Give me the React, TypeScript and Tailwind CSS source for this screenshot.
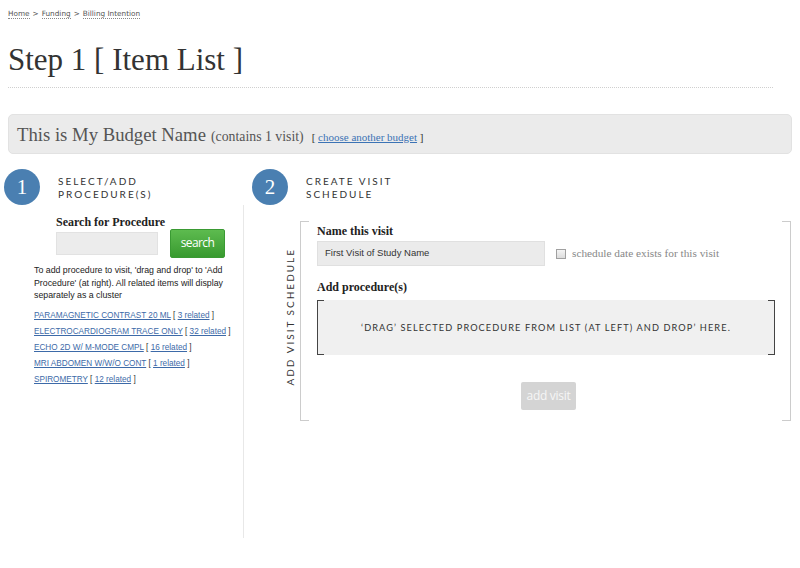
import React from "react";

const serif = { fontFamily: '"Liberation Serif", "Times New Roman", serif' };

function Circle({ n }: { n: string }) {
  return (
    <div className="w-[36px] h-[36px] rounded-full bg-[#4a7fb1] flex items-center justify-center shrink-0">
      <span className="text-white text-[21px] leading-none font-['Liberation_Serif',serif] mt-[1px]">{n}</span>
    </div>
  );
}

function StepHeader({ n, l1, l2 }: { n: string; l1: string; l2: string }) {
  return (
    <div className="flex items-start h-[36px]">
      <Circle n={n} />
      <div className="ml-[18px] mt-[6px] font-['Lato',sans-serif] text-[10px] leading-[13px] tracking-[2px] text-[#333]">
        <div>{l1}</div>
        <div>{l2}</div>
      </div>
    </div>
  );
}

const procedures: [string, string][] = [
  ["PARAMAGNETIC CONTRAST 20 ML", "3 related"],
  ["ELECTROCARDIOGRAM TRACE ONLY", "32 related"],
  ["ECHO 2D W/ M-MODE CMPL", "16 related"],
  ["MRI ABDOMEN W/W/O CONT", "1 related"],
  ["SPIROMETRY", "12 related"],
];

export default function App() {
  return (
    <div className="w-[800px] h-[568px] bg-white overflow-hidden text-[#333]">
      {/* Top */}
      <div className="px-2 pt-[9px]">
        <div className="font-['DejaVu_Sans',Verdana,sans-serif] text-[7.3px] leading-[10px] text-[#555] flex items-center gap-[3px] h-[10px]">
          <span className="border-b border-dotted border-[#888] leading-[9px]">Home</span>
          <span>&gt;</span>
          <span className="border-b border-dotted border-[#888] leading-[9px]">Funding</span>
          <span>&gt;</span>
          <span className="border-b border-dotted border-[#888] leading-[9px]">Billing Intention</span>
        </div>
        <h1 className="mt-[23px] text-[31px] leading-[36px] text-[#333] font-['Liberation_Serif',serif]">
          Step 1 [ Item List ]
        </h1>
        <div className="mt-[9px] w-[765px] border-t border-dotted border-[#cfcfcf]" />
        <div className="mt-[26px] h-[40px] box-border rounded-[5px] bg-[#ebebeb] border border-[#e2e2e2] pl-[8px] pt-[10px] flex items-baseline" style={serif}>
          <span className="text-[18.7px] leading-[19px] text-[#555]">This is My Budget Name</span>
          <span className="ml-[5px] text-[13.8px] text-[#555]">(contains 1 visit)</span>
          <span className="ml-[8px] text-[11px] text-[#333]">
            [ <span className="text-[#3b73b5] underline">choose another budget</span> ]
          </span>
        </div>
      </div>

      {/* Columns */}
      <div className="flex pl-[4px] mt-[15px]">
        {/* Left column */}
        <div className="w-[240px] flex flex-col">
          <StepHeader n="1" l1="SELECT/ADD" l2="PROCEDURE(S)" />
          <div className="h-[333px] border-r border-[#e8e8e8] pt-[10px]">
            <div className="ml-[52px]">
              <div className="text-[12px] leading-[14px] font-bold text-[#222]" style={serif}>
                Search for Procedure
              </div>
              <div className="flex items-center gap-[12px]">
                <div className="w-[102px] h-[23px] bg-[#ececec] border border-[#e2e2e2]" />
                <div className="w-[55px] h-[29px] rounded-[2px] bg-gradient-to-b from-[#5dbb4f] to-[#389a2f] border border-[#3a9a33] flex items-center justify-center">
                  <span className="text-white text-[12px] tracking-[-0.6px] font-['Open_Sans',sans-serif] leading-none mb-[1px]">search</span>
                </div>
              </div>
            </div>
            <div className="ml-[30px] mt-[6px] font-['Liberation_Sans',Arial,sans-serif] text-[8.8px] leading-[12.5px] text-[#222] whitespace-nowrap">
              To add procedure to visit, 'drag and drop' to 'Add
              <br />
              Procedure' (at right). All related items will display
              <br />
              separately as a cluster
            </div>
            <div className="ml-[30px] mt-[6px] font-['Liberation_Sans',Arial,sans-serif] text-[8.2px] leading-[16px] text-[#333] whitespace-nowrap">
              {procedures.map(([name, rel]) => (
                <div key={name}>
                  <span className="text-[#3d6aa8] underline">{name}</span> [{" "}
                  <span className="text-[#3d6aa8] underline">{rel}</span> ]
                </div>
              ))}
            </div>
          </div>
        </div>

        {/* Right column */}
        <div className="flex flex-col">
          <div className="ml-[8px]">
            <StepHeader n="2" l1="CREATE VISIT" l2="SCHEDULE" />
          </div>
          <div className="flex items-start pt-[16px]">
            <div className="ml-[41px] w-[10px] mt-[27px] flex flex-col items-center">
              <span className="block [writing-mode:vertical-rl] rotate-180 font-['Lato',sans-serif] text-[10px] leading-[10px] tracking-[2px] text-[#333] whitespace-nowrap">
                ADD VISIT SCHEDULE
              </span>
            </div>
            <div className="relative ml-[5px] w-[491px] h-[200px] border-l border-r border-[#cccccc] pl-[16px] pr-[15px] pt-[3px]">
              <span className="absolute top-0 left-0 w-[8px] h-px bg-[#cccccc]" />
              <span className="absolute bottom-0 left-0 w-[8px] h-px bg-[#cccccc]" />
              <span className="absolute top-0 right-0 w-[8px] h-px bg-[#cccccc]" />
              <span className="absolute bottom-0 right-0 w-[8px] h-px bg-[#cccccc]" />

              <div className="text-[12px] leading-[14px] font-bold text-[#222]" style={serif}>
                Name this visit
              </div>
              <div className="mt-[3px] flex items-center">
                <div className="w-[228px] h-[25px] bg-[#ebebeb] border border-[#e0e0e0] flex items-center pl-[7px]">
                  <span className="font-['Liberation_Sans',Arial,sans-serif] text-[9.5px] text-[#333]">First Visit of Study Name</span>
                </div>
                <span className="ml-[11px] w-[10px] h-[10px] border border-[#a0a0a0] bg-gradient-to-b from-[#f4f4f4] to-[#dcdcdc]" />
                <span className="ml-[6px] text-[11.3px] text-[#888]" style={serif}>
                  schedule date exists for this visit
                </span>
              </div>
              <div className="mt-[14px] text-[12px] leading-[14px] font-bold text-[#222]" style={serif}>
                Add procedure(s)
              </div>
              <div className="relative mt-[6px] h-[55px] bg-[#f0f0f0] border-l border-r border-[#444] flex items-center justify-center">
                <span className="absolute top-0 left-0 w-[6px] h-px bg-[#444]" />
                <span className="absolute bottom-0 left-0 w-[6px] h-px bg-[#444]" />
                <span className="absolute top-0 right-0 w-[6px] h-px bg-[#444]" />
                <span className="absolute bottom-0 right-0 w-[6px] h-px bg-[#444]" />
                <span className="font-['Lato',sans-serif] text-[9.2px] tracking-[1.1px] text-[#333] whitespace-nowrap">
                  ‘DRAG’ SELECTED PROCEDURE FROM LIST (AT LEFT) AND DROP’ HERE.
                </span>
              </div>
              <div className="mt-[27px] flex justify-center pl-[5px]">
                <div className="w-[55px] h-[28px] rounded-[2px] bg-[#d4d4d4] flex items-center justify-center">
                  <span className="text-[#f6f6f6] text-[12px] tracking-[-0.3px] font-['Open_Sans',sans-serif] leading-none mb-[1px]">add visit</span>
                </div>
              </div>
            </div>
          </div>
        </div>
      </div>
    </div>
  );
}
